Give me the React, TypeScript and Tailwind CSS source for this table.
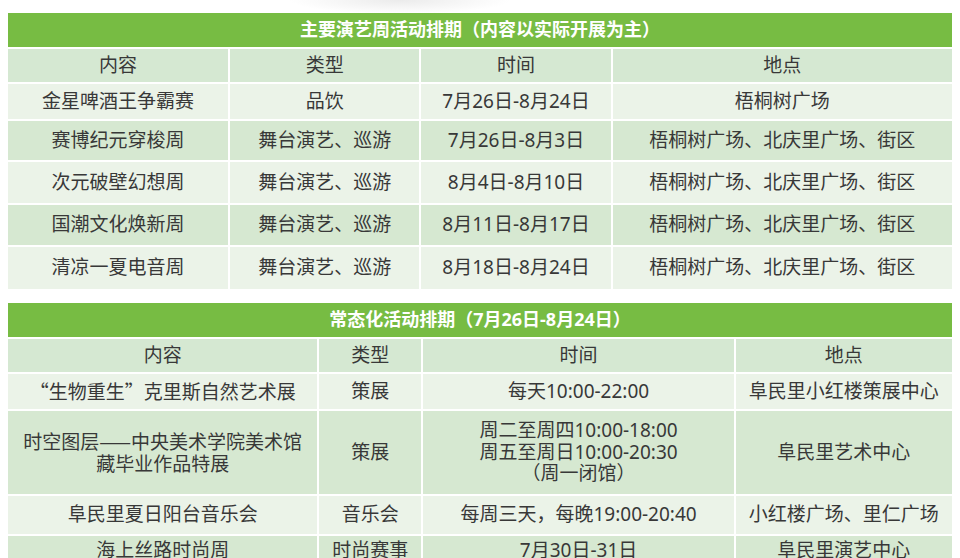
import React from "react";

interface Row {
  cells: React.ReactNode[];
  h: string;
}

const mainCols = ["w-[221px]", "w-[191px]", "w-[191px]", "w-[340px]"];
const dailyCols = ["w-[310px]", "w-[104px]", "w-[312px]", "w-[217px]"];

const cjk = "font-['Noto_Sans_CJK_SC',sans-serif]";

const mainRows: Row[] = [
  { cells: ["金星啤酒王争霸赛", "品饮", "7月26日-8月24日", "梧桐树广场"], h: "h-[37px]" },
  { cells: ["赛博纪元穿梭周", "舞台演艺、巡游", "7月26日-8月3日", "梧桐树广场、北庆里广场、街区"], h: "h-[41px]" },
  { cells: ["次元破壁幻想周", "舞台演艺、巡游", "8月4日-8月10日", "梧桐树广场、北庆里广场、街区"], h: "h-[43px]" },
  { cells: ["国潮文化焕新周", "舞台演艺、巡游", "8月11日-8月17日", "梧桐树广场、北庆里广场、街区"], h: "h-[42px]" },
  { cells: ["清凉一夏电音周", "舞台演艺、巡游", "8月18日-8月24日", "梧桐树广场、北庆里广场、街区"], h: "h-[43px]" },
];

const dailyRows: Row[] = [
  {
    cells: [
      <span className={cjk}>“生物重生”克里斯自然艺术展</span>,
      "策展",
      "每天10:00-22:00",
      "阜民里小红楼策展中心",
    ],
    h: "h-[37px]",
  },
  {
    cells: [
      <>
        时空图层<span className={cjk}>——</span>中央美术学院美术馆
        <br />
        藏毕业作品特展
      </>,
      "策展",
      <>
        周二至周四10:00-18:00
        <br />
        周五至周日10:00-20:30
        <br />
        （周一闭馆）
      </>,
      "阜民里艺术中心",
    ],
    h: "h-[85px]",
  },
  { cells: ["阜民里夏日阳台音乐会", "音乐会", "每周三天，每晚19:00-20:40", "小红楼广场、里仁广场"], h: "h-[40px]" },
  { cells: ["海上丝路时尚周", "时尚赛事", "7月30日-31日", "阜民里演艺中心"], h: "h-[30px]" },
];

const Schedule: React.FC<{ title: string; cols: string[]; rows: Row[] }> = ({ title, cols, rows }) => {
  return (
    <table className="table-fixed border-collapse w-[944px] text-[19px] leading-[21.5px] text-[#383838]">
      <colgroup>
        {cols.map((c, i) => (
          <col key={i} className={c} />
        ))}
      </colgroup>
      <thead>
        <tr className="h-[35px]">
          <th
            colSpan={4}
            className="bg-[#77bc43] text-white font-bold text-[18px] border-b-2 border-white text-center"
          >
            {title}
          </th>
        </tr>
        <tr className="h-[35px] bg-[#d5e8d2]">
          {["内容", "类型", "时间", "地点"].map((t) => (
            <th key={t} className="font-normal border-x-2 first:border-l-0 last:border-r-0 border-white text-center">
              {t}
            </th>
          ))}
        </tr>
      </thead>
      <tbody>
        {rows.map((row, i) => (
          <tr key={i} className={`${row.h} ${i % 2 === 0 ? "bg-[#ebf3e8]" : "bg-[#d6e8d1]"}`}>
            {row.cells.map((c, j) => (
              <td
                key={j}
                className="border-x-2 border-t-2 first:border-l-0 last:border-r-0 border-white text-center align-middle"
              >
                {c}
              </td>
            ))}
          </tr>
        ))}
      </tbody>
    </table>
  );
};

export default function App() {
  return (
    <div
      className="w-[960px] h-[558px] overflow-hidden bg-white"
      style={{ fontFamily: '"Noto Sans", "Noto Sans CJK SC", sans-serif' }}
    >
      <div className="h-[13px] bg-[radial-gradient(ellipse_110px_14px_at_400px_0px,#ebebeb,transparent)]" />
      <div className="pl-[8px]">
        <Schedule title="主要演艺周活动排期（内容以实际开展为主）" cols={mainCols} rows={mainRows} />
      </div>
      <div className="h-[14px]" />
      <div className="pl-[8px]">
        <Schedule title="常态化活动排期（7月26日-8月24日）" cols={dailyCols} rows={dailyRows} />
      </div>
    </div>
  );
}
